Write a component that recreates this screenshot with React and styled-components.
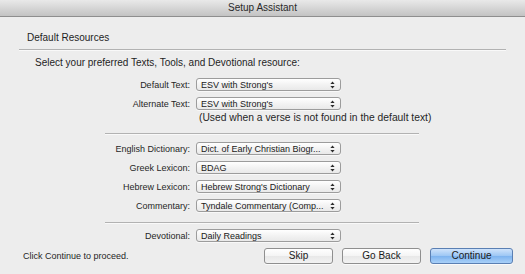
import styled, { createGlobalStyle } from 'styled-components';

const GlobalStyle = createGlobalStyle`
  html, body {
    margin: 0;
    padding: 0;
    background: #ededed;
  }
  body {
    font-family: "Liberation Sans", Arial, sans-serif;
    color: #1e1e1e;
  }
`

const Window = styled.div`
  width: 525px;
  height: 274px;
  background: #ededed;
  overflow: hidden;
`

const TitleBar = styled.div`
  height: 16px;
  line-height: 16px;
  text-align: center;
  font-size: 10px;
  color: #2a2a2a;
  background: linear-gradient(#e9e9e9, #d2d2d2 60%, #c3c3c3);
  border-bottom: 1px solid #8e8e8e;
`

const Content = styled.div`
  padding: 0 19px;
`

const Header = styled.div`
  padding: 14px 0 4px 8px;
  line-height: 14px;
  font-size: 10px;
`

const Rule = styled.div`
  height: 1px;
  background: #b2b2b2;
  box-shadow: 0 1px 0 #f9f9f9;
  margin-left: ${(p) => p.$inset || 0}px;
  width: ${(p) => (p.$width ? `${p.$width}px` : 'auto')};
  margin-top: ${(p) => p.$top || 0}px;
`

const Intro = styled.div`
  margin: 6px 0 5px 16px;
  line-height: 14px;
  font-size: 10px;
`

const Form = styled.div`
  display: grid;
  grid-template-columns: 171px 145px;
  column-gap: 6px;
  grid-auto-rows: 19px;
  align-items: center;
  margin-top: ${(p) => p.$top || 0}px;
`

const Label = styled.div`
  text-align: right;
  font-size: 9px;
  color: #262626;
`

const PopupBox = styled.div`
  display: flex;
  align-items: center;
  justify-content: space-between;
  height: 11px;
  padding: 0 5px 0 4px;
  border: 1px solid #9c9c9c;
  border-radius: 3px;
  background: linear-gradient(#ffffff, #f3f3f3 50%, #e9e9e9);
  box-shadow: 0 1px 0 rgba(255, 255, 255, 0.6);
  font-size: 9px;
  color: #1a1a1a;
  white-space: nowrap;
`

const NoteRow = styled.div`
  padding-left: 180px;
  font-size: 10.3px;
  line-height: 10px;
  height: 10px;
  color: #262626;
  white-space: nowrap;
`

const Footer = styled.div`
  display: flex;
  align-items: center;
  padding: 3px 12px 0 23px;
`

const Hint = styled.div`
  flex: 1;
  font-size: 9px;
  color: #262626;
`

const Buttons = styled.div`
  display: flex;
  gap: 9px;
`

const Button = styled.div`
  width: ${(p) => p.$w}px;
  height: 14px;
  line-height: 14px;
  text-align: center;
  font-size: 10px;
  color: #1a1a1a;
  border: 1px solid ${(p) => (p.$primary ? '#5a7fb3' : '#8f8f8f')};
  border-radius: 3px;
  background: ${(p) =>
    p.$primary
      ? 'linear-gradient(#cfe3fb, #9cc6f4 50%, #7db3ef 51%, #a9d0f8)'
      : 'linear-gradient(#ffffff, #f4f4f4 50%, #e8e8e8 51%, #f2f2f2)'};
  box-shadow: 0 1px 0 rgba(255, 255, 255, 0.7);
`

function Arrows() {
  return (
    <svg width="5" height="8" viewBox="0 0 5 8">
      <path d="M2.5 0.5 L4.6 3 L0.4 3 Z" fill="#2b2b2b" />
      <path d="M2.5 7.5 L4.6 5 L0.4 5 Z" fill="#2b2b2b" />
    </svg>
  )
}

function Popup({ value }) {
  return (
    <PopupBox>
      <span>{value}</span>
      <Arrows />
    </PopupBox>
  )
}

function FieldRow({ label, value }) {
  return (
    <>
      <Label>{label}</Label>
      <Popup value={value} />
    </>
  )
}

const textRows = [
  ['Default Text:', "ESV with Strong's"],
  ['Alternate Text:', "ESV with Strong's"],
]

const toolRows = [
  ['English Dictionary:', 'Dict. of Early Christian Biogr...'],
  ['Greek Lexicon:', 'BDAG'],
  ['Hebrew Lexicon:', "Hebrew Strong's Dictionary"],
  ['Commentary:', 'Tyndale Commentary (Comp...'],
]

export default function App() {
  return (
    <Window>
      <GlobalStyle />
      <TitleBar>Setup Assistant</TitleBar>
      <Content>
        <Header>Default Resources</Header>
        <Rule />
        <Intro>Select your preferred Texts, Tools, and Devotional resource:</Intro>
        <Form>
          {textRows.map(([label, value]) => (
            <FieldRow key={label} label={label} value={value} />
          ))}
        </Form>
        <NoteRow>(Used when a verse is not found in the default text)</NoteRow>
        <Rule $inset={86} $width={314} $top={10} />
        <Form $top={5}>
          {toolRows.map(([label, value]) => (
            <FieldRow key={label} label={label} value={value} />
          ))}
        </Form>
        <Rule $inset={86} $width={314} $top={7} />
        <Form $top={3}>
          <FieldRow label="Devotional:" value="Daily Readings" />
        </Form>
      </Content>
      <Footer>
        <Hint>Click Continue to proceed.</Hint>
        <Buttons>
          <Button $w={67}>Skip</Button>
          <Button $w={77}>Go Back</Button>
          <Button $w={81} $primary>Continue</Button>
        </Buttons>
      </Footer>
    </Window>
  )
}
